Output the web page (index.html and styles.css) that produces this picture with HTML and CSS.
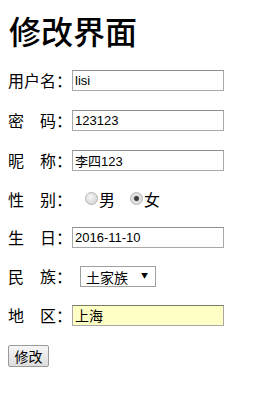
FILE: index.html
```html
<!DOCTYPE html>
<html lang="zh-CN">
<head>
    <meta charset="UTF-8">
    <meta name="viewport" content="width=device-width, initial-scale=1.0">
    <title>修改界面</title>
    <link rel="stylesheet" href="styles.css">
</head>
<body>
    <h1>修改界面</h1>
    <form class="edit-form">
        <div class="row">
            <label for="username">用户名：</label><input type="text" id="username" value="lisi">
        </div>
        <div class="row">
            <label for="password">密　码：</label><input type="text" id="password" value="123123">
        </div>
        <div class="row">
            <label for="nickname">昵　称：</label><input type="text" id="nickname" value="李四123">
        </div>
        <div class="row row-short">
            <label>性　别：</label>
            <span class="radios">
                <input type="radio" name="sex" id="male"><label for="male">男</label>
                <input type="radio" name="sex" id="female" checked><label for="female">女</label>
            </span>
        </div>
        <div class="row">
            <label for="birthday">生　日：</label><input type="text" id="birthday" value="2016-11-10">
        </div>
        <div class="row row-select">
            <label for="nation">民　族：</label>
            <span class="select-wrap">
                <select id="nation">
                    <option>汉族</option>
                    <option selected>土家族</option>
                    <option>回族</option>
                </select>
            </span>
        </div>
        <div class="row row-last">
            <label for="area">地　区：</label><input type="text" id="area" class="filled" value="上海">
        </div>
        <button type="submit">修改</button>
    </form>
</body>
</html>
```

FILE: styles.css
```css
body {
    margin: 8px;
    font-family: "Noto Sans CJK SC", "Liberation Sans", sans-serif;
    font-size: 16px;
    color: #000;
    background: #fff;
}
h1 {
    margin: 0 0 17px 1px;
    font-size: 32px;
    line-height: 44px;
    font-weight: 500;
    font-family: "Noto Sans CJK SC", serif;
}
.row {
    display: flex;
    align-items: center;
    height: 22px;
    margin-bottom: 18px;
}
.row-short {
    height: 19px;
}
.row-select {
    height: 20px;
}
.row-last {
    margin-bottom: 17px;
}
.row label {
    line-height: 22px;
}
input[type="text"] {
    box-sizing: border-box;
    width: 152px;
    height: 21px;
    margin: 0;
    padding: 0 2px;
    border: 1px solid #a8a8a8;
    border-top-color: #8e8e8e;
    font-family: "Liberation Sans", "Noto Sans CJK SC", sans-serif;
    font-size: 13px;
    color: #000;
    outline: none;
}
input.filled {
    background: #fdffc4;
    border-top-color: #7a7a6a;
    font-family: "Noto Sans CJK SC", sans-serif;
    font-size: 14px;
}
.radios {
    display: flex;
    align-items: center;
    margin-left: 13px;
}
.radios label {
    margin-right: 15px;
    margin-left: 1px;
}
input[type="radio"] {
    appearance: none;
    box-sizing: border-box;
    width: 13px;
    height: 13px;
    margin: 0;
    border: 1px solid #b4b4b4;
    border-radius: 50%;
    background: radial-gradient(circle at 40% 35%, #f4f4f4, #cfcfcf);
}
input[type="radio"]:checked {
    background: radial-gradient(circle, #3c3c3c 0, #3c3c3c 2px, #dcdcdc 3px, #e8e8e8);
}
.select-wrap {
    position: relative;
    margin-left: 8px;
}
.select-wrap::after {
    content: "▼";
    position: absolute;
    right: 8px;
    top: 6px;
    font-size: 7px;
    pointer-events: none;
}
select {
    appearance: none;
    box-sizing: border-box;
    width: 76px;
    height: 21px;
    padding: 0 0 0 5px;
    border: 1px solid #a0a0a0;
    background: #fff;
    font-family: "Noto Sans CJK SC", sans-serif;
    font-size: 14px;
    color: #000;
}
button {
    box-sizing: border-box;
    width: 41px;
    height: 22px;
    padding: 0;
    border: 1px solid #9a9a9a;
    border-radius: 2px;
    background: linear-gradient(#f6f6f6, #dedede);
    font-family: "Noto Sans CJK SC", sans-serif;
    font-size: 14px;
    color: #000;
}
```
